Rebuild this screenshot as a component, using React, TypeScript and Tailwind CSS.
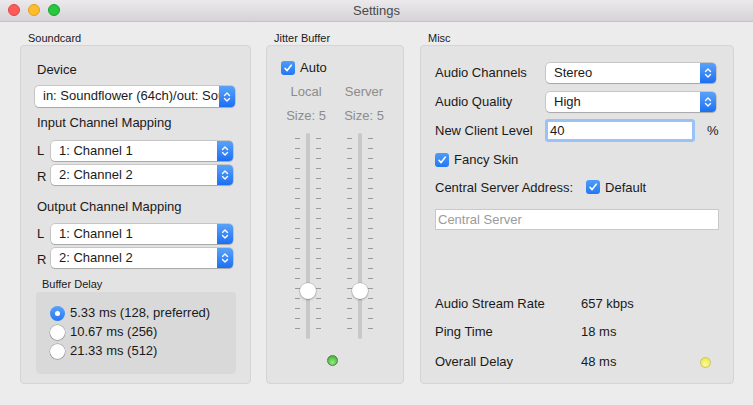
import React from "react";

const font = { fontFamily: '"Liberation Sans", Arial, sans-serif' };

function Chevrons() {
  return (
    <svg width="8" height="12" viewBox="0 0 8 12" fill="none" stroke="white" strokeWidth="1.4" strokeLinecap="round" strokeLinejoin="round">
      <path d="M1.5 4.5 L4 2 L6.5 4.5" />
      <path d="M1.5 7.5 L4 10 L6.5 7.5" />
    </svg>
  );
}

function Select({ value, className = "" }: { value: string; className?: string }) {
  return (
    <div className={`flex h-[20px] items-stretch rounded-[4px] bg-white shadow-[0_0_0_0.5px_rgba(0,0,0,0.25),0_1px_1px_rgba(0,0,0,0.15)] ${className}`}>
      <div className="flex-1 overflow-hidden whitespace-nowrap pl-[8px] text-[13px] leading-[20px] text-[#1a1a1a]">{value}</div>
      <div className="flex w-[16px] items-center justify-center rounded-r-[4px] bg-gradient-to-b from-[#5aa2f8] to-[#1b6ff2]">
        <Chevrons />
      </div>
    </div>
  );
}

function Check({ label }: { label: string }) {
  return (
    <div className="flex items-center gap-[5px]">
      <div className="flex h-[14px] w-[14px] shrink-0 items-center justify-center rounded-[3px] bg-gradient-to-b from-[#4e9cf8] to-[#2377f2]">
        <svg width="10" height="10" viewBox="0 0 10 10" fill="none" stroke="white" strokeWidth="1.6" strokeLinecap="round" strokeLinejoin="round">
          <path d="M2 5.3 L4.1 7.6 L8.2 2.2" />
        </svg>
      </div>
      <span className="text-[13px] text-[#1a1a1a]">{label}</span>
    </div>
  );
}

function Radio({ label, on }: { label: string; on?: boolean }) {
  return (
    <div className="flex h-[19px] items-center gap-[5px]">
      {on ? (
        <div className="flex h-[15px] w-[15px] shrink-0 items-center justify-center rounded-full bg-gradient-to-b from-[#5aa2f8] to-[#2377f2]">
          <div className="h-[5px] w-[5px] rounded-full bg-white" />
        </div>
      ) : (
        <div className="h-[15px] w-[15px] shrink-0 rounded-full bg-white shadow-[0_0_0_0.5px_rgba(0,0,0,0.3),0_1px_1px_rgba(0,0,0,0.1)]" />
      )}
      <span className="text-[13px] text-[#1a1a1a]">{label}</span>
    </div>
  );
}

function Ticks() {
  return (
    <div className="flex flex-col gap-[8px] pt-[5px]">
      {Array.from({ length: 20 }).map((_, i) => (
        <div key={i} className="h-[2px] w-[5px] border-t border-[#9a9a9a]" />
      ))}
    </div>
  );
}

function Slider() {
  return (
    <div className="relative flex h-[206px] w-[26px] justify-between">
      <Ticks />
      <Ticks />
      <div className="absolute left-[11px] top-0 h-[206px] w-[4px] rounded-full bg-[#c8c8c8]" />
      <div className="absolute left-[5px] top-[150px] h-[16px] w-[16px] rounded-full bg-white shadow-[0_0_0_0.5px_rgba(0,0,0,0.2),0_1px_2px_rgba(0,0,0,0.25)]" />
    </div>
  );
}

function Group({ title, className, children }: { title: string; className: string; children: React.ReactNode }) {
  return (
    <div className={`flex flex-col ${className}`}>
      <div className="pl-[8px] text-[11px] leading-[14px] text-[#1a1a1a]">{title}</div>
      <div className="h-[339px] rounded-[4px] border border-[#d5d5d5] bg-[#e3e3e3]">{children}</div>
    </div>
  );
}

export default function App() {
  return (
    <div className="h-[405px] w-[753px] overflow-hidden bg-[#ececec]" style={font}>
      {/* barra de título */}
      <div className="relative flex h-[22px] items-center justify-center border-b border-[#c4c4c4] bg-gradient-to-b from-[#ebe9eb] to-[#d5d3d5]">
        <div className="absolute left-[8px] top-[4px] flex gap-[8px]">
          <div className="h-[12px] w-[12px] rounded-full bg-[#fc5b57] border border-[#e2463f]" />
          <div className="h-[12px] w-[12px] rounded-full bg-[#fdbc2e] border border-[#e1a116]" />
          <div className="h-[12px] w-[12px] rounded-full bg-[#28c73f] border border-[#13a827]" />
        </div>
        <span className="text-[13px] text-[#4a4a4a]">Settings</span>
      </div>

      <div className="flex pl-[20px] pt-[9px]">
        {/* Soundcard */}
        <Group title="Soundcard" className="w-[231px]">
          <div className="flex flex-col px-[14px] pt-[16px]">
            <div className="pl-[2px] text-[13px] leading-[16px] text-[#1a1a1a]">Device</div>
            <Select value="in: Soundflower (64ch)/out: Soundflower" className="mt-[8px] h-[21px] w-[200px]" />
            <div className="mt-[8px] pl-[2px] text-[13px] leading-[16px] text-[#1a1a1a]">Input Channel Mapping</div>
            <div className="mt-[10px] flex flex-col gap-[3px]">
              <div className="flex items-center">
                <span className="w-[16px] pl-[2px] text-[13px] text-[#1a1a1a]">L</span>
                <Select value="1: Channel 1" className="w-[182px]" />
              </div>
              <div className="flex items-center">
                <span className="w-[16px] pl-[2px] pt-[3px] text-[13px] text-[#1a1a1a]">R</span>
                <Select value="2: Channel 2" className="w-[182px]" />
              </div>
            </div>
            <div className="mt-[12px] pl-[2px] text-[13px] leading-[16px] text-[#1a1a1a]">Output Channel Mapping</div>
            <div className="mt-[9px] flex flex-col gap-[3px]">
              <div className="flex items-center">
                <span className="w-[16px] pl-[2px] text-[13px] text-[#1a1a1a]">L</span>
                <Select value="1: Channel 1" className="w-[182px]" />
              </div>
              <div className="flex items-center">
                <span className="w-[16px] pl-[2px] pt-[3px] text-[13px] text-[#1a1a1a]">R</span>
                <Select value="2: Channel 2" className="w-[182px]" />
              </div>
            </div>
            <div className="mt-[8px] pl-[7px] text-[11px] leading-[14px] text-[#1a1a1a]">Buffer Delay</div>
            <div className="ml-[1px] mt-[1px] flex h-[82px] w-[200px] flex-col justify-center rounded-[4px] bg-[#d9d9d9] pb-[2px] pl-[14px]">
              <Radio label="5.33 ms (128, preferred)" on />
              <Radio label="10.67 ms (256)" />
              <Radio label="21.33 ms (512)" />
            </div>
          </div>
        </Group>

        {/* Jitter Buffer */}
        <Group title="Jitter Buffer" className="ml-[15px] w-[138px]">
          <div className="flex flex-col pt-[12px]">
            <div className="pl-[14px]">
              <Check label="Auto" />
            </div>
            <div className="mt-[6px] flex justify-between px-[10px] text-[13px] leading-[16px] text-[#8c8c8c]">
              <div className="flex w-[58px] flex-col items-center gap-[8px]">
                <span>Local</span>
                <span>Size: 5</span>
              </div>
              <div className="flex w-[58px] flex-col items-center gap-[8px]">
                <span>Server</span>
                <span>Size: 5</span>
              </div>
            </div>
            <div className="mt-[9px] flex justify-between pl-[28px] pr-[30px]">
              <Slider />
              <Slider />
            </div>
            <div className="mt-[16px] flex justify-center pr-[6px]">
              <div className="h-[11px] w-[11px] rounded-full border border-[#6b6b6b] bg-[radial-gradient(circle_at_50%_70%,#8ef07a,#2fa82a)]" />
            </div>
          </div>
        </Group>

        {/* Misc */}
        <Group title="Misc" className="ml-[16px] w-[314px]">
          <div className="flex flex-col px-[14px] pt-[17px] text-[13px] text-[#1a1a1a]">
            <div className="flex items-center">
              <span className="w-[111px]">Audio Channels</span>
              <Select value="Stereo" className="w-[170px]" />
            </div>
            <div className="mt-[9px] flex items-center">
              <span className="w-[111px]">Audio Quality</span>
              <Select value="High" className="w-[170px]" />
            </div>
            <div className="mt-[7px] flex items-center">
              <span className="w-[110px]">New Client Level</span>
              <div className="h-[23px] w-[150px] rounded-[3px] bg-[#9ac2f6] p-[3px]">
                <div className="h-full w-full bg-white pl-[2px] text-[13px] leading-[17px]">40</div>
              </div>
              <span className="ml-[12px]">%</span>
            </div>
            <div className="mt-[8px]">
              <Check label="Fancy Skin" />
            </div>
            <div className="mt-[8px] flex items-center gap-[13px]">
              <span>Central Server Address:</span>
              <Check label="Default" />
            </div>
            <div className="mt-[12px] h-[21px] w-[284px] border border-[#c9c9c9] bg-white pl-[2px] text-[13px] leading-[19px] text-[#9b9b9b]">
              Central Server
            </div>
            <div className="mt-[59px] flex flex-col">
              <div className="flex h-[29px] items-center">
                <span className="w-[146px]">Audio Stream Rate</span>
                <span>657 kbps</span>
              </div>
              <div className="flex h-[28px] items-center">
                <span className="w-[146px]">Ping Time</span>
                <span>18 ms</span>
              </div>
              <div className="flex h-[32px] items-center">
                <span className="w-[146px]">Overall Delay</span>
                <span className="flex-1">48 ms</span>
                <div className="mr-[8px] h-[11px] w-[11px] rounded-full border border-[#c9c36a] bg-[radial-gradient(circle_at_50%_70%,#fffb9a,#e8e238)]" />
              </div>
            </div>
          </div>
        </Group>
      </div>
    </div>
  );
}
